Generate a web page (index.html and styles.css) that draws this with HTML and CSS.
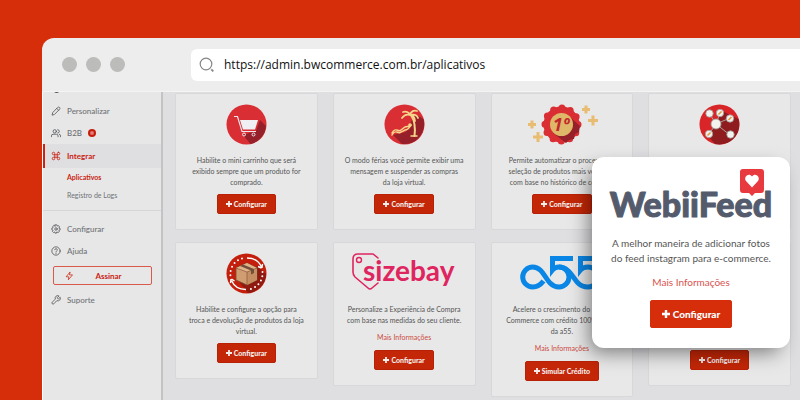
FILE: index.html
```html
<!DOCTYPE html>
<html lang="pt-BR">
<head>
<meta charset="utf-8">
<title>Aplicativos</title>
<link rel="stylesheet" href="styles.css">
</head>
<body>
<div class="browser">
  <header class="chrome">
    <div class="dots"><span class="dot"></span><span class="dot"></span><span class="dot"></span></div>
    <label class="address">
      <svg class="search" viewBox="0 0 16 16" fill="none" stroke="#858585"><circle cx="7" cy="7" r="5.8" stroke-width="1.2"/><path d="M12.3 12.3l2 2" stroke-width="1.8"/></svg>
      <input class="url" type="text" aria-label="Endereço" value="https://admin.bwcommerce.com.br/aplicativos">
    </label>
  </header>
  <div class="app">
    <nav class="sidebar">
      <svg class="peek" viewBox="0 0 10 2"><path d="M3 0h5q-2 2-5 0z" fill="#555"/></svg>
      <a class="item" href="#"><svg class="ico" viewBox="0 0 24 24"><path d="M16 3.500a3 3 0 0 1 4.500 4.500L8 20.500 2.500 22 4 16.500zM14 6l4 4"/></svg>Personalizar</a>
      <a class="item" href="#"><svg class="ico" viewBox="0 0 24 24"><circle cx="9" cy="8" r="4"/><path d="M1 21v-2a4 4 0 0 1 4-4h8a4 4 0 0 1 4 4v2M16 4a4 4 0 0 1 0 8M20 15a4 4 0 0 1 3 4v2"/></svg>B2B<svg class="badge" viewBox="0 0 16 16"><circle cx="8" cy="8" r="8" fill="#c81b0c"/><path d="M8 4v8M4 8h8M5.500 5.500l5 5M10.500 5.500l-5 5" stroke="#f3d9d5" stroke-width="1.600"/><circle cx="8" cy="8" r="1.500" fill="#c81b0c"/></svg></a>
      <a class="item active" href="#"><svg class="ico" viewBox="0 0 24 24"><path d="M18 3a3 3 0 0 0-3 3v12a3 3 0 1 0 3-3H6a3 3 0 1 0 3 3V6a3 3 0 1 0-3 3h12a3 3 0 0 0 0-6z"/></svg>Integrar</a>
      <a class="sub current" href="#">Aplicativos</a>
      <a class="sub" href="#">Registro de Logs</a>
      <hr class="rule">
      <a class="item" href="#"><svg class="ico" viewBox="0 0 24 24"><circle cx="12" cy="12" r="3"/><path d="M10 2h4l1 3 3-1 2.500 3-1.500 3 3 1v3l-3 1 1 3-3 2.500-3-1.500-1 3h-3l-1-3-3 1.500L3.500 18 5 15l-3-1v-4l3-1-1-3 3-2.500L9.500 5z"/></svg>Configurar</a>
      <a class="item" href="#"><svg class="ico" viewBox="0 0 24 24"><circle cx="12" cy="12" r="10"/><path d="M9 9a3 3 0 0 1 6 1c0 2-3 2-3 4M12 17v1"/></svg>Ajuda</a>
      <button class="subscribe" type="button"><svg class="ico" viewBox="0 0 24 24"><path d="M13 2L3 14h7l-1 8 11-13h-7z"/></svg><span class="subscribe-text">Assinar</span></button>
      <a class="item" href="#"><svg class="ico" viewBox="0 0 24 24"><path d="M15 6a1 1 0 0 0 0 1.500l1.500 1.500a1 1 0 0 0 1.500 0l4-3.500a6 6 0 0 1-8 8L7 21a2 2 0 0 1-4-4l7.500-7a6 6 0 0 1 8-8z"/></svg>Suporte</a>
    </nav>
    <main class="grid">
      <article class="card">
        <svg class="pic" viewBox="0 0 41 41"><circle cx="20.500" cy="20.500" r="20" fill="#d92e33"/><path d="M34 16l6 6a20 20 0 0 1-15.500 18L17 31l13-4z" fill="#96202a"/><path d="M8 12.500h3.500l4.500 15h14" fill="none" stroke="#eee7ec" stroke-width="1.200"/><path d="M14 16h18l-3 9.500H17z" fill="#f0eff4"/><circle cx="18" cy="30.500" r="1.500" fill="none" stroke="#eee7ec"/><circle cx="27.500" cy="30.500" r="1.500" fill="none" stroke="#eee7ec"/></svg>
        <p class="text">Habilite o mini carrinho que será<br>exibido sempre que um produto for<br>comprado.</p>
        <button class="btn" type="button"><svg class="plus" viewBox="0 0 10 10"><path d="M5 0v10M0 5h10"/></svg>Configurar</button>
      </article>
      <article class="card">
        <svg class="pic" viewBox="0 0 41 41"><circle cx="20.500" cy="20.500" r="20" fill="#d92e33"/><path d="M31 10l8.500 5A20 20 0 0 1 18 40L9 31l13-3z" fill="#96202a"/><g fill="none" stroke="#f6d58b" stroke-linecap="round"><path d="M27 11c4 6 4.500 13 3.500 21" stroke-width="2"/><path d="M26 11c-3-1-6 0-8 3M26 11c-1-3-4-4-7-3M26 11c1-4 4-5 7-4M26 11c4-1 7 0 8 3M26 11c3 0 5 3 5 6" stroke-width="1.800"/><path d="M8 31c4-7 6 0 9-3l4-2c3 0 4-2 6-5M8 29c4-7 6 0 9-3l4-3 5-1" stroke-width="1.500"/><path d="M27 32h6" stroke-width="1.500"/></g><circle cx="26" cy="21" r="1.800" fill="#f6d58b"/></svg>
        <p class="text">O modo férias você permite exibir uma<br>mensagem e suspender as compras<br>da loja virtual.</p>
        <button class="btn" type="button"><svg class="plus" viewBox="0 0 10 10"><path d="M5 0v10M0 5h10"/></svg>Configurar</button>
      </article>
      <article class="card">
        <svg class="pic seal" viewBox="0 0 73 41"><circle cx="36.500" cy="20.500" r="18" fill="#d92e33"/><circle cx="36.500" cy="20.500" r="16.500" fill="none" stroke="#d92e33" stroke-width="7" stroke-linecap="round" stroke-dasharray="0 8.639"/><path d="M45 13l10 9-1 6-4 2-1 5-5 1-3 3-13-10z" fill="#96202a"/><circle cx="36.500" cy="20.500" r="11.500" fill="#dfb768"/><text class="seal-text" x="36" y="27" text-anchor="middle">1º</text><path d="M7 16.500v8M3 20.500h8M13 28v10M8 33h10M61 1.500v8M57 5.500h8M68 11.500v10M63 16.500h10" stroke="#e8bd72" stroke-width="3"/></svg>
        <p class="text">Permite automatizar o processo de<br>seleção de produtos mais vendidos<br>com base no histórico de compras</p>
        <button class="btn" type="button"><svg class="plus" viewBox="0 0 10 10"><path d="M5 0v10M0 5h10"/></svg>Configurar</button>
      </article>
      <article class="card">
        <svg class="pic" viewBox="0 0 41 41"><circle cx="20.500" cy="20.500" r="20" fill="#d92528"/><path d="M23 7l16.500 8A20 20 0 0 1 16 40l-7-8 7-12z" fill="#8f1d20"/><path d="M17 20l-7-11M17 20l4-11M17 20l14-6M17 20L10 30M17 20l14 11" stroke="#a9a29c"/><g fill="#f4f2ef" stroke="#9d9893" stroke-width=".8"><circle cx="17" cy="20" r="5"/><circle cx="10.500" cy="9.500" r="3.700"/><circle cx="21" cy="9" r="3.700"/><circle cx="31" cy="14.500" r="3.700"/><circle cx="10" cy="30" r="3.700"/><circle cx="31.500" cy="30.500" r="3.700"/></g><path d="M19.500 10.500l3-3M29.500 16l3-3M8.500 31.500l3-3" stroke="#e09a3c" stroke-width="1.500"/></svg>
      </article>
      <article class="card">
        <svg class="pic" viewBox="0 0 41 41"><circle cx="20.500" cy="20.500" r="20" fill="#c41f0c"/><path d="M31 13l9 8A20 20 0 0 1 22 40l-8-10z" fill="#8f1a10"/><path d="M21 5c7 0 12 3 14.500 9M35.500 15l-3.500-1.500M36 15l.5-4M20 36.500c-7 0-12-3-14.500-9M5.500 26l3 2M5 26l-.5 4" fill="none" stroke="#fff" stroke-width="1.400"/><path d="M16 5.500A16 16 0 0 0 4.500 23M36.500 19A16 16 0 0 1 23 36.300" fill="none" stroke="#fff" stroke-width="2" stroke-linecap="round" stroke-dasharray="0 4.400"/><path d="M10 15l11-5 10 5v12l-10 5-11-5z" fill="#d09c71" stroke="#7a4e30" stroke-width=".8"/><path d="M10 15l11 4 10-4-10-5z" fill="#e1b389"/><path d="M21 19v13l10-5V15z" fill="#c58f63"/><path d="M14 13l11 4.500v4l3-1.500v-4L17 11.500z" fill="#705038"/><path d="M10 15l11 4 10-4M21 19v13" fill="none" stroke="#7a4e30" stroke-width=".6"/></svg>
        <p class="text">Habilite e configure a opção para<br>troca e devolução de produtos da loja<br>virtual.</p>
        <button class="btn" type="button"><svg class="plus" viewBox="0 0 10 10"><path d="M5 0v10M0 5h10"/></svg>Configurar</button>
      </article>
      <article class="card">
        <svg class="pic wide" viewBox="0 0 104 41"><path d="M26 5L21 1H6Q1 1 1 6V19Q1 22 3 24L16 35Q18 37 20 35L26 30" fill="none" stroke="#df2560" stroke-width="1.600" stroke-linecap="round"/><circle cx="7" cy="7" r="2.500" fill="none" stroke="#df2560" stroke-width="1.400"/><text class="sizebay" x="11" y="28">sizebay</text></svg>
        <p class="text">Personalize a Experiência de Compra<br>com base nas medidas do seu cliente.</p>
        <a class="more" href="#">Mais Informações</a>
        <button class="btn" type="button"><svg class="plus" viewBox="0 0 10 10"><path d="M5 0v10M0 5h10"/></svg>Configurar</button>
      </article>
      <article class="card">
        <svg class="pic wide" viewBox="0 0 84 41"><g fill="none" stroke="#0a87e6" stroke-width="5"><path d="M23.500 28C20 32.500 17 34 12.700 34A10 10 0 0 1 12.700 14C22 14 25 25 30 30C33 33 36 34 39 34A10 10 0 0 0 39 14Q35 14 32.500 17V5.500H53"/><path d="M39 14C49 14 53 25 58 30C61 33 64 34 68 34A10 10 0 0 0 68 14Q63 14 60.500 17V5.500H80"/></g></svg>
        <p class="text">Acelere o crescimento do seu E-<br>Commerce com crédito 100% online<br>da a55.</p>
        <a class="more" href="#">Mais Informações</a>
        <button class="btn" type="button"><svg class="plus" viewBox="0 0 10 10"><path d="M5 0v10M0 5h10"/></svg>Simular Crédito</button>
      </article>
      <article class="card covered">
        <button class="btn" type="button"><svg class="plus" viewBox="0 0 10 10"><path d="M5 0v10M0 5h10"/></svg>Configurar</button>
      </article>
    </main>
    <section class="popup">
      <svg class="brand" viewBox="0 0 164 52"><text class="brand-text" x="82" y="48" text-anchor="middle">WebiiFeed</text><path d="M134 0h18a3 3 0 0 1 3 3v18a3 3 0 0 1-3 3h-6l-3 3-3-3h-6a3 3 0 0 1-3-3V3a3 3 0 0 1 3-3z" fill="#e8393e"/><path d="M143 18.500l-6-6.500c-3-4 3-9 6-4.500 3-4.500 9 .5 6 4.500z" fill="#fff"/></svg>
      <p class="popup-text">A melhor maneira de adicionar fotos<br>do feed instagram para e-commerce.</p>
      <a class="popup-more" href="#">Mais Informações</a>
      <button class="btn large" type="button"><svg class="plus" viewBox="0 0 10 10"><path d="M5 0v10M0 5h10"/></svg>Configurar</button>
    </section>
  </div>
</div>
</body>
</html>
```
FILE: styles.css
```css
* { box-sizing: border-box; }
body {
  margin: 0;
  height: 100vh;
  overflow: hidden;
  background: #d62d0a;
  font-family: Lato, "Open Sans", sans-serif;
  color: #555;
}
a { text-decoration: none; }
button { font-family: inherit; cursor: pointer; }
svg { display: block; flex: none; }

.browser {
  margin: 38px 0 0 42px;
  min-height: calc(100vh - 38px);
  display: flex;
  flex-direction: column;
  border-radius: 12px 0 0 0;
  overflow: hidden;
  background: #ededed;
}
.chrome {
  display: flex;
  align-items: center;
  gap: 66px;
  height: 54px;
  padding-left: 20px;
  border-bottom: 1px solid #f4f4f4;
}
.dots { display: flex; gap: 9px; }
.dot { width: 15px; height: 15px; border-radius: 50%; background: #bcbcbb; }
.address {
  flex: 1;
  display: flex;
  align-items: center;
  gap: 9px;
  height: 32px;
  padding-left: 8px;
  border-radius: 6px 0 0 6px;
  background: #fff;
}
.search { width: 16px; height: 16px; }
.url {
  flex: 1;
  border: 0;
  padding: 0;
  background: none;
  outline: 0;
  font: 12px "Open Sans", sans-serif;
  color: #111;
}

.app {
  position: relative;
  flex: 1;
  display: flex;
  background: #dfdfe2;
}
.sidebar {
  width: 121px;
  background: #e7e7e7;
  border-left: 1px solid #fff;
  border-right: 2px solid #c3c3c5;
}
.peek { width: 10px; height: 2px; margin: 0 0 6px 8px; }
.item {
  display: flex;
  align-items: center;
  gap: 6px;
  height: 22px;
  padding-left: 8px;
  font-size: 8px;
  font-weight: 500;
  color: #707376;
}
.ico {
  width: 10px;
  height: 10px;
  fill: none;
  stroke: #55585b;
  stroke-width: 2;
  stroke-linejoin: round;
  stroke-linecap: round;
}
.badge { width: 8px; height: 8px; }
.active {
  height: 24px;
  border-left: 2px solid #cb2412;
  padding-left: 6px;
  background: #dfdfe1;
  color: #c92312;
  font-weight: 700;
}
.active .ico, .subscribe .ico { stroke: #c92312; }
.sub {
  display: block;
  padding-left: 24px;
  font-size: 7px;
  line-height: 18px;
  color: #707376;
}
.current { color: #c92312; font-weight: 700; }
.rule { margin: 6px 0 7px; border: 0; border-top: 1px solid #d5d6d7; }
.subscribe {
  display: flex;
  align-items: center;
  width: 99px;
  height: 19px;
  margin: 4px 0 4px 10px;
  padding: 0 8px 0 11px;
  border: 1px solid #d9594b;
  border-radius: 2px;
  background: none;
  font-size: 8px;
  font-weight: 700;
  color: #c92312;
}
.subscribe .ico { width: 9px; }
.subscribe-text { flex: 1; }

.grid {
  flex: 1;
  display: grid;
  grid-template-columns: repeat(4, 1fr);
  align-content: start;
  align-items: start;
  gap: 12px 15px;
  padding: 1px 9px 0 12px;
}
.card {
  display: flex;
  flex-direction: column;
  align-items: center;
  min-height: 137px;
  padding: 10px 0 15px;
  border: 1px solid #d8d8db;
  border-radius: 2px;
  background: #e8e8e8;
}
.pic { width: 41px; height: 41px; margin-bottom: 10px; }
.seal { width: 73px; }
.wide { width: 104px; }
.seal-text { font: italic 700 18px "Noto Sans", sans-serif; fill: #c3282d; }
.sizebay { font: 700 28px Lato, sans-serif; fill: #df2560; }
.text {
  margin: 0 0 6px;
  font-size: 7px;
  line-height: 11px;
  text-align: center;
  white-space: nowrap;
}
.more { margin-bottom: 7px; font-size: 7px; line-height: 11px; color: #cc4b40; }
.btn {
  display: flex;
  align-items: center;
  justify-content: center;
  gap: 2px;
  min-width: 59px;
  height: 20px;
  padding: 0 8px;
  border: 1px solid #b92106;
  border-radius: 2px;
  background: #c42707;
  color: #f3eeec;
  font-size: 7px;
  font-weight: 900;
}
.plus { width: 6px; height: 6px; stroke: currentColor; stroke-width: 3; }
.covered { min-height: 144px; justify-content: flex-end; }

.popup {
  position: absolute;
  top: 65px;
  right: 10px;
  width: 198px;
  display: flex;
  flex-direction: column;
  align-items: center;
  padding: 12px 0 20px;
  border-radius: 12px;
  background: #fff;
  box-shadow: -6px 8px 20px -4px rgba(0, 0, 0, 0.5);
}
.brand { width: 164px; height: 52px; margin-bottom: 15px; }
.brand-text {
  font: 900 34px Lato, sans-serif;
  fill: #545b6c;
  stroke: #545b6c;
  stroke-width: 1;
  stroke-linejoin: round;
}
.popup-text {
  margin: 0 0 9px;
  font-size: 10px;
  line-height: 15px;
  text-align: center;
  white-space: nowrap;
}
.popup-more { margin-bottom: 10px; font-size: 10px; line-height: 15px; color: #d9534f; }
.large {
  width: 82px;
  height: 28px;
  gap: 3px;
  border-color: #d62d0a;
  background: #d62d0a;
  color: #fff;
  font-size: 10px;
}
.large .plus { width: 8px; height: 8px; }
```
